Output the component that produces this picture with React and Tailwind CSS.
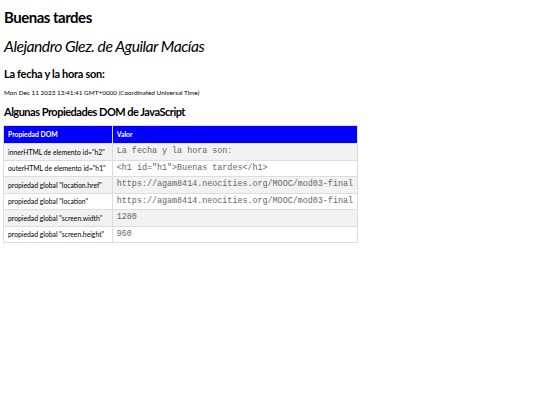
const rows = [
    ["innerHTML de elemento id=\"h2\"", "La fecha y la hora son:"],
    ["outerHTML de elemento id=\"h1\"", "<h1 id=\"h1\">Buenas tardes</h1>"],
    ["propiedad global \"location.href\"", "https://agam8414.neocities.org/MOOC/mod03-final"],
    ["propiedad global \"location\"", "https://agam8414.neocities.org/MOOC/mod03-final"],
    ["propiedad global \"screen.width\"", "1280"],
    ["propiedad global \"screen.height\"", "960"],
]

export default function App() {
    return (
        <div className="w-[540px] h-[405px] bg-white text-black px-[4px] font-['Lato',sans-serif]">
            <h1 className="pt-[7px] h-[34px] text-[15px] leading-[20px] font-bold tracking-[-0.5px]">Buenas tardes</h1>
            <h2 className="h-[26px] text-[15.7px] leading-[24px] italic tracking-[-0.5px]">Alejandro Glez. de Aguilar Macías</h2>
            <h3 className="pt-[6px] h-[27px] text-[11px] leading-[16px] font-bold tracking-[-0.3px]">La fecha y la hora son:</h3>
            <p className="h-[11px] text-[6.4px] leading-[12px]">Mon Dec 11 2023 13:41:41 GMT+0000 (Coordinated Universal Time)</p>
            <h3 className="pt-[5px] h-[27px] text-[11px] leading-[18px] font-bold tracking-[-0.5px]">Algunas Propiedades DOM de JavaScript</h3>
            <table className="-ml-[1px] w-[355px] border-collapse">
                <thead>
                    <tr className="bg-[#0000ff] text-white h-[18px]">
                        <th className="w-[109px] text-left font-bold text-[6.8px] px-[4px] border border-[#dddddd]">Propiedad DOM</th>
                        <th className="text-left font-bold text-[6.8px] px-[4px] border border-[#dddddd]">Valor</th>
                    </tr>
                </thead>
                <tbody>
                    {rows.map((r, i) => (
                        <tr key={i} className={i % 2 === 0 ? "bg-[#f2f2f2] h-[16.5px]" : "bg-white h-[16.5px]"}>
                            <td className="text-[6.8px] px-[4px] border border-[#dddddd] whitespace-nowrap">{r[0]}</td>
                            <td className="text-[8.4px] px-[4px] border border-[#dddddd] text-[#666] font-['Liberation_Mono',monospace] whitespace-nowrap">{r[1]}</td>
                        </tr>
                    ))}
                </tbody>
            </table>
        </div>
    )
}
